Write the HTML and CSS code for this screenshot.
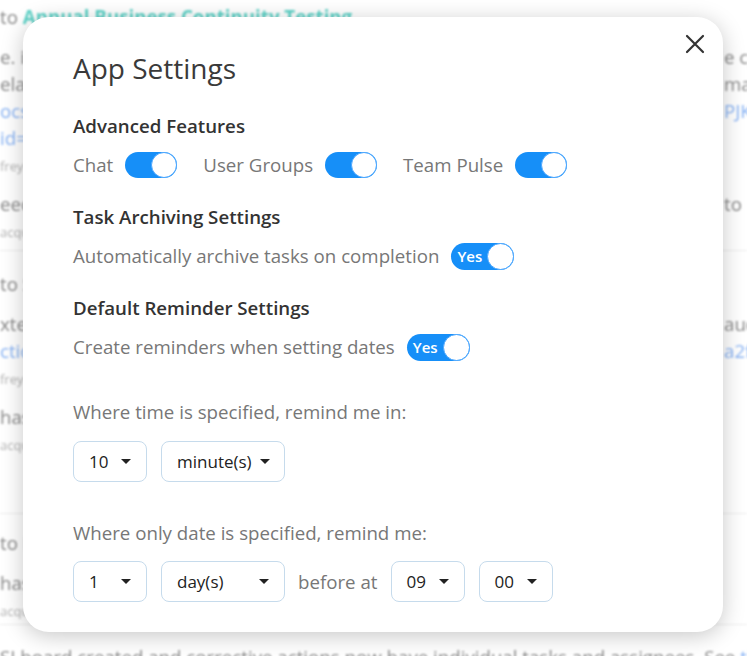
FILE: index.html
```html
<!DOCTYPE html>
<html lang="en">

<head>
    <meta charset="UTF-8">
    <meta name="viewport" content="width=device-width, initial-scale=1.0">
    <title>App Settings</title>
    <link rel="stylesheet" href="styles.css">
</head>

<body>
    <div class="feed">
        <div class="entry first">
            <div class="head">to <span class="teal">Annual Business Continuity Testing</span></div>
            <div class="txt">
                <div class="ln"><span>e. it was agreed the recovery plan is reviewed before each cycle and th</span><span>e cycle</span></div>
                <div class="ln"><span>elated documents are attached so the team can check what needs to be</span><span>made</span></div>
                <div class="ln link"><span>ocs.google.com/document/d/1xQ7vTzq83bLwe0rD4uM5kYh</span><span>PJKLm</span></div>
                <div class="ln link"><span>id=0</span><span></span></div>
            </div>
            <div class="meta">frey Collins &middot; 12 Mar at 10:42</div>
            <div class="txt">
                <div class="ln"><span>eed to confirm the new contact list for the testing window before we move</span><span>to</span></div>
            </div>
            <div class="meta">acqueline Moore &middot; 12 Mar at 11:05</div>
        </div>

        <div class="entry second">
            <div class="head">to Supplier Review</div>
            <div class="txt">
                <div class="ln"><span>xternal providers were added to the review list together with the previous</span><span>audit</span></div>
                <div class="ln link"><span>ction plan: https://drive.google.com/file/d/8f3c1e9b7d2a44e6</span><span>a2f0</span></div>
            </div>
            <div class="meta">frey Collins &middot; 10 Mar at 16:20</div>
            <div class="txt">
                <div>has been shared with the owners for sign off</div>
            </div>
            <div class="meta">acqueline Moore &middot; 10 Mar at 17:02</div>
        </div>

        <div class="entry third">
            <div class="head">to Incident Log</div>
            <div class="txt">
                <div>has been updated with the latest findings</div>
            </div>
            <div class="meta">acqueline Moore &middot; 9 Mar at 09:14</div>
        </div>

        <div class="entry last">
            <div class="txt">
                <div>SI board created and corrective actions now have individual tasks and assignees. See <span class="link">the</span></div>
            </div>
        </div>
    </div>

    <div class="modal">
        <button class="close" aria-label="Close">
            <svg width="20" height="20" viewBox="0 0 20 20">
                <path d="M2 2 L18 18 M18 2 L2 18" stroke="#333" stroke-width="2.2" stroke-linecap="round" fill="none" />
            </svg>
        </button>

        <h1>App Settings</h1>

        <div class="section">
            <h3>Advanced Features</h3>
            <div class="row features">
                <div class="opt">
                    <span>Chat</span>
                    <span class="toggle on"><span class="knob"></span></span>
                </div>
                <div class="opt">
                    <span>User Groups</span>
                    <span class="toggle on"><span class="knob"></span></span>
                </div>
                <div class="opt">
                    <span>Team Pulse</span>
                    <span class="toggle on"><span class="knob"></span></span>
                </div>
            </div>
        </div>

        <div class="section">
            <h3>Task Archiving Settings</h3>
            <div class="row">
                <div class="opt">
                    <span>Automatically archive tasks on completion</span>
                    <span class="toggle big on"><span class="yes">Yes</span><span class="knob"></span></span>
                </div>
            </div>
        </div>

        <div class="section">
            <h3>Default Reminder Settings</h3>
            <div class="row">
                <div class="opt">
                    <span>Create reminders when setting dates</span>
                    <span class="toggle big on"><span class="yes">Yes</span><span class="knob"></span></span>
                </div>
            </div>

            <p class="hint">Where time is specified, remind me in:</p>
            <div class="selects">
                <div class="select small"><span>10</span><i class="caret"></i></div>
                <div class="select wide"><span>minute(s)</span><i class="caret"></i></div>
            </div>

            <p class="hint">Where only date is specified, remind me:</p>
            <div class="selects">
                <div class="select small"><span>1</span><i class="caret"></i></div>
                <div class="select wide"><span>day(s)</span><i class="caret"></i></div>
                <span class="before">before at</span>
                <div class="select small"><span>09</span><i class="caret"></i></div>
                <div class="select small"><span>00</span><i class="caret"></i></div>
            </div>
        </div>
    </div>
</body>
</html>
```

FILE: styles.css
```css
body {
    margin: 0;
    height: 656px;
    overflow: hidden;
    background-color: #ffffff;
    font-family: "Open Sans", "Liberation Sans", sans-serif;
    position: relative;
}

/* blurred page behind the dialog */
.feed {
    filter: blur(1px);
    color: #8a8a8a;
    font-size: 18.7px;
    white-space: nowrap;
}

.entry {
    border-bottom: 1px solid #ececec;
}

.entry.first {
    padding: 5px 0 8px;
}

.entry.second {
    padding: 21px 0 58px;
}

.entry.third {
    padding: 17px 0 3px;
}

.entry.last {
    border-bottom: none;
    padding-top: 4px;
}

.head {
    line-height: 24px;
}

.teal {
    color: #5fd3c8;
    font-weight: 700;
}

.txt {
    margin-top: 14px;
    line-height: 27px;
}

.ln {
    display: grid;
    grid-template-columns: 724px auto;
}

.ln span:first-child {
    overflow: hidden;
}

.link {
    color: #8ab4f4;
}

.meta {
    margin-top: 5px;
    line-height: 20px;
    font-size: 13px;
    color: #b3b3b3;
}

/* dialog */
.modal {
    position: absolute;
    left: 23px;
    top: 17px;
    width: 700px;
    height: 615px;
    box-sizing: border-box;
    padding: 33px 50px 31px;
    background-color: #ffffff;
    border-radius: 26px;
    box-shadow: 0 4px 22px rgba(0, 0, 0, 0.22);
    color: #777777;
    font-size: 18.7px;
}

.close {
    position: absolute;
    top: 13px;
    right: 14px;
    width: 28px;
    height: 28px;
    padding: 0;
    border: none;
    background: none;
    display: flex;
    align-items: center;
    justify-content: center;
}

h1 {
    margin: 0 0 28px;
    font-size: 28px;
    line-height: 36px;
    font-weight: 400;
    color: #3a3a3a;
}

h3 {
    margin: 0 0 13px;
    font-size: 18.7px;
    line-height: 24px;
    font-weight: 600;
    color: #333333;
}

.section {
    margin-bottom: 26px;
}

.row {
    display: flex;
    align-items: center;
    height: 28px;
}

.features {
    gap: 26px;
}

.opt {
    display: flex;
    align-items: center;
    gap: 12px;
    line-height: 24px;
}

.toggle {
    display: inline-flex;
    align-items: center;
    justify-content: space-between;
    box-sizing: border-box;
    width: 52px;
    height: 26px;
    border-radius: 13px;
    background-color: #168ff8;
}

.toggle .knob {
    margin-left: auto;
    box-sizing: border-box;
    width: 26px;
    height: 26px;
    border-radius: 50%;
    background-color: #ffffff;
    border: 1px solid #4aa6ff;
}

.toggle.big {
    width: 63px;
    height: 27px;
    border-radius: 14px;
}

.toggle.big .knob {
    width: 27px;
    height: 27px;
}

.yes {
    padding-left: 6px;
    color: #ffffff;
    font-size: 15px;
    font-weight: 600;
    line-height: 27px;
}

.hint {
    margin: 39px 0 17px;
    line-height: 24px;
}

.hint + .selects + .hint {
    margin-top: 39px;
    margin-bottom: 16px;
}

.selects {
    display: flex;
    align-items: center;
    gap: 14px;
}

.select {
    display: flex;
    align-items: center;
    box-sizing: border-box;
    height: 41px;
    padding: 0 15px;
    border: 1px solid #c6dbec;
    border-radius: 8px;
    color: #222222;
    font-size: 17px;
}

.select.small {
    width: 74px;
}

.select.wide {
    width: 124px;
}

.select span {
    flex: 1;
}

.caret {
    flex-shrink: 0;
    margin-left: 8px;
    width: 0;
    height: 0;
    border-left: 5px solid transparent;
    border-right: 5px solid transparent;
    border-top: 5px solid #222222;
}

.before {
    margin: 0 -1px;
}
```
